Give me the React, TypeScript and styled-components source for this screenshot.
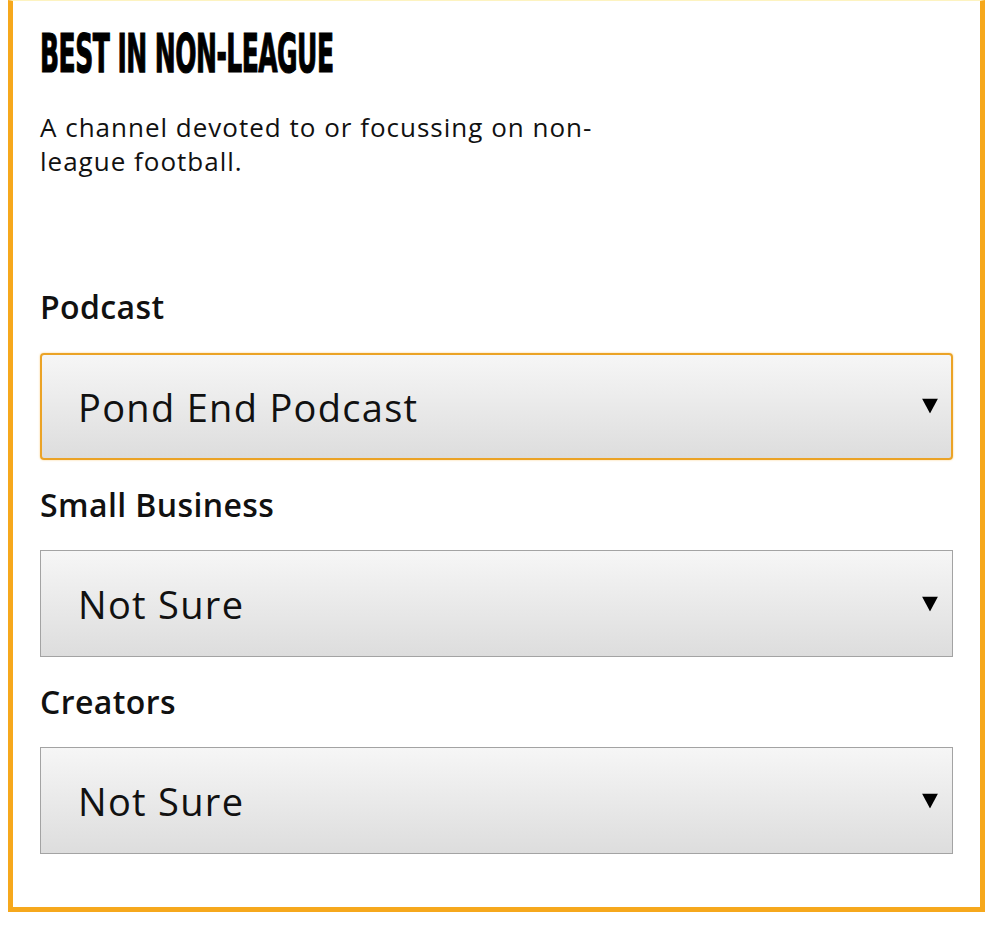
import React from "react";
import styled, { createGlobalStyle } from "styled-components";

const Global = createGlobalStyle`
  html, body { margin: 0; padding: 0; background: #ffffff; }
  body { font-family: "Open Sans", "Noto Sans", sans-serif; color: #111; }
`;

const Card = styled.section`
  box-sizing: border-box;
  margin: 0 0 0 8px;
  width: 977px;
  border: 5px solid #f6a81c;
  border-top: 1px solid #fdf3c0;
  padding: 31px 27px 53px 27px;
  background: #fff;
`;

const Title = styled.h2`
  margin: 0;
  height: 46px;
  font-family: "Liberation Sans Narrow", "DejaVu Sans Condensed", "Liberation Sans", sans-serif;
  font-weight: 700;
  font-size: 54px;
  line-height: 44px;
  color: #000;
  letter-spacing: -1px;
  white-space: nowrap;
`;

const TitleInner = styled.span`
  display: inline-block;
  transform: scale(0.515, 1);
  transform-origin: left center;
  -webkit-text-stroke: 1.2px #000;
`;

const Description = styled.p`
  margin: 32px 0 0 0;
  width: 600px;
  min-height: 177px;
  font-size: 26px;
  line-height: 34px;
  letter-spacing: 1px;
  color: #111;
`;

const Field = styled.div`
  display: flex;
  flex-direction: column;
`;

const Label = styled.label`
  font-size: 32px;
  font-weight: 600;
  line-height: 40px;
  margin: 0 0 25px 0;
  color: #111;
  letter-spacing: 0.4px;
`;

const SelectWrap = styled.div`
  position: relative;
  margin-bottom: 25px;
`;

const Select = styled.select<{ $focused?: boolean }>`
  appearance: none;
  -webkit-appearance: none;
  box-sizing: border-box;
  width: 100%;
  height: 107px;
  margin-top: ${(p) => (p.$focused ? "1px" : "0")};
  padding: 0 60px 0 ${(p) => (p.$focused ? 36 : 37)}px;
  font-family: "Open Sans", "Noto Sans", sans-serif;
  font-size: 38px;
  letter-spacing: 1.3px;
  color: #111;
  background: linear-gradient(#f6f6f6, #dddddd);
  border: ${(p) => (p.$focused ? "2px solid #eba326" : "1px solid #a3a3a3")};
  border-radius: ${(p) => (p.$focused ? "4px" : "0")};
  box-shadow: ${(p) => (p.$focused ? "0 0 2px rgba(246,168,28,0.6)" : "none")};
  outline: none;
`;

const Arrow = styled.svg`
  position: absolute;
  right: 15px;
  top: 50%;
  transform: translateY(-50%);
  pointer-events: none;
`;

const Fields = styled.div`
  display: flex;
  flex-direction: column;
  & > div:last-child > div { margin-bottom: 0; }
`;

type Row = { label: string; value: string; options: string[]; focused?: boolean };

const rows: Row[] = [
  { label: "Podcast", value: "Pond End Podcast", options: ["Not Sure", "Pond End Podcast"], focused: true },
  { label: "Small Business", value: "Not Sure", options: ["Not Sure"] },
  { label: "Creators", value: "Not Sure", options: ["Not Sure"] },
];

export default function App() {
  return (
    <>
      <Global />
      <Card>
        <Title>
          <TitleInner>BEST IN NON-LEAGUE</TitleInner>
        </Title>
        <Description>
          A channel devoted to or focussing on non-league football.
        </Description>
        <Fields>
          {rows.map((r) => (
            <Field key={r.label}>
              <Label>{r.label}</Label>
              <SelectWrap>
                <Select $focused={r.focused} defaultValue={r.value}>
                  {r.options.map((o) => (
                    <option key={o} value={o}>
                      {o}
                    </option>
                  ))}
                </Select>
                <Arrow width="16" height="15" viewBox="0 0 16 15">
                  <polygon points="0,0 16,0 8,15" fill="#000" />
                </Arrow>
              </SelectWrap>
            </Field>
          ))}
        </Fields>
      </Card>
    </>
  );
}
